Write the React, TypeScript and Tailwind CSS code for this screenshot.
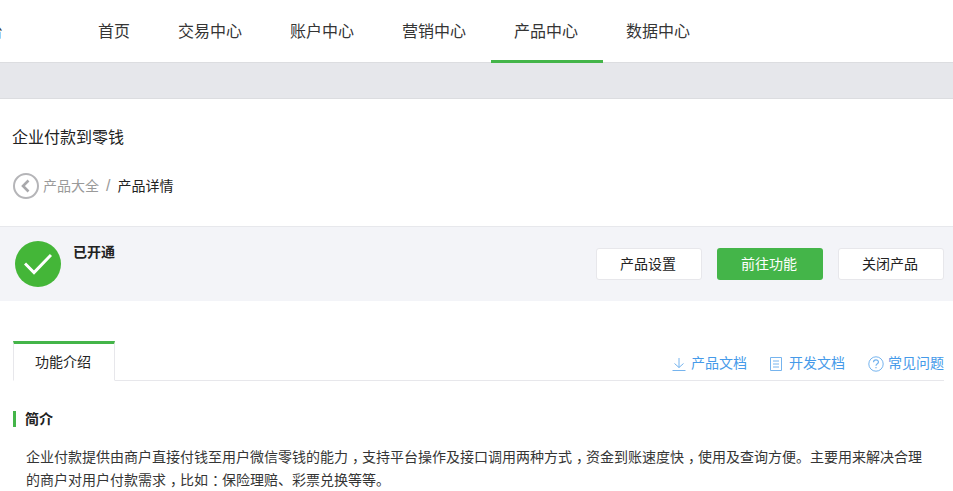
import React from 'react';

const navItems = ['首页', '交易中心', '账户中心', '营销中心', '产品中心', '数据中心'];

// the screenshot's font sets , and : in the middle of the cell
const Punct: React.FC<{ children: React.ReactNode }> = ({ children }) => (
  <span className="inline-block translate-x-[4px]">{children}</span>
);

const App: React.FC = () => {
  return (
    <div className="h-[491px] w-[953px] overflow-hidden bg-white text-[#353535] font-['Liberation_Sans','Noto_Sans_CJK_SC',sans-serif]">
      <div className="flex h-[63px] border-b border-[#dcdde0]">
        <div className="w-[75px] overflow-hidden pt-[20px] text-[16px] leading-6">
          <span className="-ml-[13px] block">台</span>
        </div>
        {navItems.map((item) => (
          <div
            key={item}
            className={`flex h-[63px] items-center pl-[23px] pr-[25px] pt-[1px] text-[16px] ${
              item === '产品中心' ? 'border-b-[3px] border-[#44b549] pt-[4px]' : ''
            }`}
          >
            {item}
          </div>
        ))}
      </div>
      <div className="h-[36px] border-b border-[#dcdde0] bg-[#e6e7eb]" />

      <div className="h-[127px] px-[12px]">
        <h1 className="pt-[27px] text-[16px] leading-[24px] text-[#222]">企业付款到零钱</h1>
        <div className="ml-[1px] mt-[23px] flex h-[26px] items-center text-[14px]">
          <svg width="26" height="26" viewBox="0 0 26 26" fill="none" className="mr-[4px]">
            <circle cx="13" cy="13" r="12" stroke="#b5b5b8" strokeWidth="2" />
            <path d="M15.5 7.5 L10 13 L15.5 18.5" stroke="#a8a8ab" strokeWidth="2.6" />
          </svg>
          <span className="text-[#9a9a9a]">产品大全</span>
          <span className="ml-[7px] mr-[7px] text-[16px] text-[#9a9a9a]">/</span>
          <span className="text-[#222]">产品详情</span>
        </div>
      </div>

      <div className="flex h-[75px] border-t border-[#e7e8ec] bg-[#f3f4f8]">
        <div className="flex flex-1 pl-[15px] pt-[14px]">
          <div className="flex h-[46px] w-[46px] items-center justify-center rounded-full bg-[#44b638]">
            <svg width="28" height="22" viewBox="0 0 28 22" fill="none">
              <path d="M1 10.5 L10 19.5 L27 2" stroke="#fff" strokeWidth="3" />
            </svg>
          </div>
          <div className="ml-[12px] mt-[1px] text-[14px] font-bold leading-[20px] text-[#222]">已开通</div>
        </div>
        <div className="flex gap-[15px] pr-[9px] pt-[21px]">
          <button className="h-[32px] w-[106px] rounded-[3px] border border-[#e7e7eb] bg-white pr-[2px] text-[14px] text-[#222]">
            产品设置
          </button>
          <button className="h-[32px] w-[106px] rounded-[3px] bg-[#44b549] pr-[2px] text-[14px] text-white">前往功能</button>
          <button className="h-[32px] w-[106px] rounded-[3px] border border-[#e7e7eb] bg-white pr-[2px] text-[14px] text-[#222]">
            关闭产品
          </button>
        </div>
      </div>

      <div className="px-[13px] pt-[40px]">
        <div className="flex h-[40px] w-[931px] items-end justify-between border-b border-[#e7e7eb]">
          <div className="-mb-px flex h-[40px] w-[102px] items-center justify-center border-x border-b border-x-[#e7e7eb] border-b-white border-t-[3px] border-t-[#44b549] bg-white pr-[2px] text-[14px] text-[#222]">
            功能介绍
          </div>
          <div className="flex h-[39px] items-center pt-[6px] text-[14px] text-[#459ae9]">
            <svg width="14" height="14" viewBox="0 0 14 14" fill="none" stroke="#76b4ee" className="mr-[5px]">
              <path d="M7 1 V10.5 M2.5 6.5 L7 10.5 L11.5 6.5 M0.5 13.5 H13.5" />
            </svg>
            <span>产品文档</span>
            <svg width="12" height="14" viewBox="0 0 12 14" fill="none" stroke="#76b4ee" className="ml-[23px] mr-[7px]">
              <path d="M0.5 0.5 H11.5 V13.5 H0.5 Z M3 4 H9 M3 7 H9 M3 10 H9" />
            </svg>
            <span>开发文档</span>
            <svg width="16" height="16" viewBox="0 0 16 16" fill="none" stroke="#76b4ee" className="ml-[23px] mr-[4px]">
              <circle cx="8" cy="8" r="7.2" />
              <path d="M5.5 6.2 C5.5 3.2 10.5 3.2 10.5 6 C10.5 7.8 8 7.8 8 9.8 M8 11 V12.3" strokeWidth="1.2" />
            </svg>
            <span>常见问题</span>
          </div>
        </div>

        <div className="mt-[30px] flex h-[16px] items-center border-l-[3px] border-[#44b549] pl-[9px] text-[14px] font-bold text-[#222]">
          简介
        </div>
        <p className="mt-[19px] w-[921px] pl-[13px] text-[14px] leading-[23px] text-[#353535]">
          企业付款提供由商户直接付钱至用户微信零钱的能力<Punct>，</Punct>支持平台操作及接口调用两种方式<Punct>，</Punct>资金到账速度快<Punct>，</Punct>使用及查询方便。主要用来解决合理的商户对用户付款需求<Punct>，</Punct>比如<Punct>：</Punct>保险理赔、彩票兑换等等。
        </p>
      </div>
    </div>
  );
};

export default App;
